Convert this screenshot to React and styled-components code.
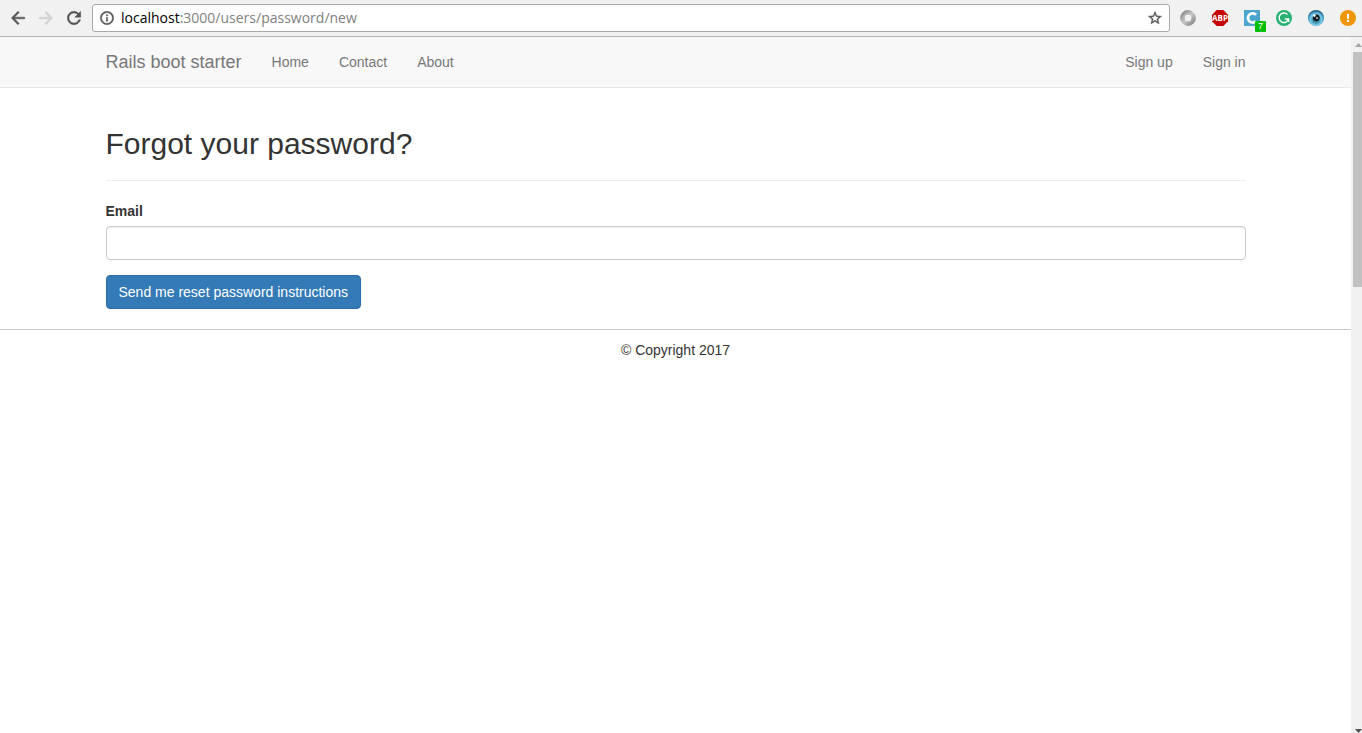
import React from "react";
import styled, { createGlobalStyle } from "styled-components";
import { MdArrowBack, MdArrowForward, MdRefresh, MdInfoOutline, MdStarBorder } from "react-icons/md";

const GlobalStyle = createGlobalStyle`
  *, *::before, *::after { box-sizing: border-box; }
  body {
    margin: 0;
    background: #fff;
    color: #333;
    font: 14px/20px "Liberation Sans", Arial, sans-serif;
  }
`;

const Window = styled.div`
  display: flex;
  flex-direction: column;
  height: 100vh;
  overflow: hidden;
`;

const Toolbar = styled.header`
  display: flex;
  align-items: center;
  flex: none;
  height: 37px;
  padding: 0 6px 0 4px;
  background: #f1f1f1;
  border-bottom: 1px solid #b4b4b4;
`;

const ToolButton = styled.button`
  display: flex;
  align-items: center;
  justify-content: center;
  flex: none;
  width: 28px;
  height: 28px;
  padding: 0;
  border: 0;
  background: none;
  color: ${(p) => (p.disabled ? "#d0d0d0" : "#555")};

  path:not([fill="none"]) { stroke: currentColor; stroke-width: 0.6; }
  path[fill="none"] { stroke: none; }
`;

const AddressBar = styled.div`
  display: flex;
  align-items: center;
  flex: 1;
  height: 28px;
  margin: 0 10px 0 4px;
  padding-right: 5px;
  border: 1px solid #a9a9a9;
  border-radius: 3px;
  background: #fff;
  font: 14px/20px "Open Sans", "Noto Sans", sans-serif;
`;

const Host = styled.label`
  color: #000;
`;

const UrlInput = styled.input`
  flex: 1;
  min-width: 0;
  height: 20px;
  padding: 0;
  border: 0;
  outline: 0;
  background: none;
  color: #808080;
  font: inherit;
`;

const BarButton = styled(ToolButton)`
  width: ${(p) => p.$width};
  height: 20px;
`;

const Extensions = styled.div`
  display: flex;
  gap: 16px;
`;

const ExtensionButton = styled.button`
  position: relative;
  display: block;
  width: 16px;
  height: 16px;
  padding: 0;
  border: 0;
  background: none;

  svg { display: block; }
`;

const Badge = styled.span`
  position: absolute;
  top: 11px;
  left: 11px;
  width: 11px;
  height: 11px;
  border-radius: 1px;
  background: #00c000;
  color: #fff;
  font: 9px/11px "Liberation Sans", sans-serif;
  text-align: center;
`;

const Viewport = styled.div`
  display: flex;
  flex: 1;
  min-height: 0;
`;

const Page = styled.div`
  flex: 1;
  min-width: 0;
  overflow: hidden;
`;

const Container = styled.div`
  max-width: 1170px;
  margin: 0 auto;
  padding: 0 15px;
`;

const Navbar = styled.nav`
  background: #f8f8f8;
  border-bottom: 1px solid #e7e7e7;
`;

const NavRow = styled(Container)`
  display: flex;
  align-items: center;
  min-height: 50px;
`;

const Brand = styled.a`
  padding-right: 15px;
  color: #777;
  font-size: 18px;
  text-decoration: none;
`;

const NavList = styled.ul`
  display: flex;
  margin: ${(p) => (p.$right ? "0 -15px 0 auto" : "0")};
  padding: 0;
  list-style: none;
`;

const NavLink = styled.a`
  display: block;
  padding: 15px;
  color: #777;
  text-decoration: none;
`;

const Main = styled(Container).attrs({ as: "main" })`
  padding-top: 39px;
  padding-bottom: 20px;
`;

const Title = styled.h1`
  margin: 0 0 20px;
  font-size: 30px;
  font-weight: 500;
  line-height: 33px;
`;

const Divider = styled.hr`
  margin: 0 0 20px;
  border: 0;
  border-top: 1px solid #eee;
`;

const FieldLabel = styled.label`
  display: block;
  margin-bottom: 5px;
  font-weight: 700;
`;

const TextField = styled.input`
  display: block;
  width: 100%;
  height: 34px;
  margin-bottom: 15px;
  padding: 6px 12px;
  border: 1px solid #ccc;
  border-radius: 4px;
  background: #fff;
  box-shadow: inset 0 1px 1px rgba(0, 0, 0, 0.075);
  color: #555;
  font: inherit;
`;

const SubmitButton = styled.button`
  display: block;
  height: 34px;
  padding: 6px 12px;
  border: 1px solid #2e6da4;
  border-radius: 4px;
  background: #337ab7;
  color: #fff;
  font: inherit;
`;

const Footer = styled.footer`
  padding: 10px 0;
  border-top: 1px solid #c8c8c8;
  text-align: center;
`;

const Scrollbar = styled.div`
  display: flex;
  flex-direction: column;
  flex: none;
  width: 11px;
  padding-left: 2px;
  background: #f1f1f1;
`;

const ScrollArrow = styled.button`
  display: flex;
  justify-content: flex-end;
  align-items: ${(p) => p.$align};
  flex: none;
  height: ${(p) => p.$height};
  padding: 0;
  border: 0;
  background: none;
  color: ${(p) => p.$color};
`;

const Track = styled.div`
  flex: 1;
`;

const Thumb = styled.div`
  height: 35%;
  background: #c1c1c1;
`;

const RingIcon = () => (
  <svg width="16" height="16" viewBox="0 0 16 16" aria-hidden="true">
    <defs>
      <linearGradient id="ring" x1="0" y1="0" x2="1" y2="1">
        <stop offset="0" stopColor="#8a8a8a" />
        <stop offset="0.5" stopColor="#c8c8c8" />
        <stop offset="1" stopColor="#8a8a8a" />
      </linearGradient>
    </defs>
    <circle cx="8" cy="8" r="5.7" fill="#f1f1f1" stroke="url(#ring)" strokeWidth="4.4" />
    <path d="M4 9.5A4.3 4.3 0 0 1 9 3.8" fill="none" stroke="#b8b8b8" strokeWidth="1.2" />
    <path d="M7 12.3A4.4 4.4 0 0 0 12.3 7" fill="none" stroke="#a8a8a8" strokeWidth="1.2" />
  </svg>
);

const AdblockIcon = () => (
  <svg width="16" height="16" viewBox="0 0 16 16" aria-hidden="true">
    <path d="M4.7 0h6.6L16 4.7v6.6L11.3 16H4.7L0 11.3V4.7z" fill="#c70000" />
    <text x="8" y="11" fill="#fff" fontFamily="Open Sans, sans-serif" fontWeight="700" fontSize="8" textAnchor="middle">
      ABP
    </text>
  </svg>
);

const SquareCIcon = () => (
  <svg width="16" height="16" viewBox="0 0 16 16" aria-hidden="true">
    <path d="M0 0h16v16H0z" fill="#4ba6cf" />
    <path d="M12 4.7A4.7 4.7 0 1 0 12 11.3" fill="none" stroke="#fff" strokeWidth="2.8" />
  </svg>
);

const GreenGIcon = () => (
  <svg width="16" height="16" viewBox="0 0 16 16" aria-hidden="true">
    <circle cx="8" cy="8" r="8" fill="#27b272" />
    <path d="M11.5 4.5A4.8 4.8 0 1 0 12.6 9H8.8M12.6 9v3" fill="none" stroke="#fff" strokeWidth="1.4" />
  </svg>
);

const EyeIcon = () => (
  <svg width="16" height="16" viewBox="0 0 16 16" aria-hidden="true">
    <defs>
      <radialGradient id="iris" cx="0.5" cy="0.6" r="0.55">
        <stop offset="0.3" stopColor="#3584a6" />
        <stop offset="0.65" stopColor="#7dcdec" />
        <stop offset="0.85" stopColor="#3f99c2" />
        <stop offset="1" stopColor="#2c5f7b" />
      </radialGradient>
    </defs>
    <circle cx="8" cy="8" r="8" fill="url(#iris)" />
    <circle cx="8.3" cy="7.8" r="3.4" fill="#101a20" />
    <circle cx="6.4" cy="5.6" r="1.3" fill="#fff" />
    <circle cx="9" cy="8" r="1" fill="#b9cbd2" />
  </svg>
);

const AlertIcon = () => (
  <svg width="16" height="16" viewBox="0 0 16 16" aria-hidden="true">
    <circle cx="8" cy="8" r="8" fill="#f09609" />
    <path d="M7 4h2v5H7zM7 10h2v2H7z" fill="#fff" />
  </svg>
);

const extensions = [
  { name: "Ring", Icon: RingIcon },
  { name: "Adblock", Icon: AdblockIcon },
  { name: "Clipper", Icon: SquareCIcon, badge: "7" },
  { name: "Grammar", Icon: GreenGIcon },
  { name: "Eye", Icon: EyeIcon },
  { name: "Alert", Icon: AlertIcon },
];

const NavItems = ({ items, right }) => (
  <NavList $right={right}>
    {items.map((item) => (
      <li key={item}>
        <NavLink href="#">{item}</NavLink>
      </li>
    ))}
  </NavList>
);

export default function App() {
  return (
    <Window>
      <GlobalStyle />
      <Toolbar>
        <ToolButton aria-label="Back"><MdArrowBack size={20} /></ToolButton>
        <ToolButton aria-label="Forward" disabled><MdArrowForward size={20} /></ToolButton>
        <ToolButton aria-label="Reload"><MdRefresh size={20} /></ToolButton>
        <AddressBar>
          <BarButton $width="28px" aria-label="Site information"><MdInfoOutline size={16} /></BarButton>
          <Host htmlFor="url">localhost</Host>
          <UrlInput id="url" type="text" defaultValue=":3000/users/password/new" spellCheck={false} />
          <BarButton $width="18px" aria-label="Bookmark"><MdStarBorder size={16} /></BarButton>
        </AddressBar>
        <Extensions>
          {extensions.map(({ name, Icon, badge }) => (
            <ExtensionButton key={name} aria-label={name}>
              <Icon />
              {badge && <Badge>{badge}</Badge>}
            </ExtensionButton>
          ))}
        </Extensions>
      </Toolbar>
      <Viewport>
        <Page>
          <Navbar>
            <NavRow>
              <Brand href="#">Rails boot starter</Brand>
              <NavItems items={["Home", "Contact", "About"]} />
              <NavItems items={["Sign up", "Sign in"]} right />
            </NavRow>
          </Navbar>
          <Main>
            <Title>Forgot your password?</Title>
            <Divider />
            <form onSubmit={(e) => e.preventDefault()}>
              <FieldLabel htmlFor="email">Email</FieldLabel>
              <TextField id="email" type="email" />
              <SubmitButton type="submit">Send me reset password instructions</SubmitButton>
            </form>
          </Main>
          <Footer>© Copyright 2017</Footer>
        </Page>
        <Scrollbar>
          <ScrollArrow $height="15px" $align="center" $color="#a3a3a3" aria-label="Scroll up">
            <svg width="7" height="4" viewBox="0 0 7 4"><path d="M0 4 3.5 0 7 4z" fill="currentColor" /></svg>
          </ScrollArrow>
          <Track><Thumb /></Track>
          <ScrollArrow $height="10px" $align="flex-end" $color="#505050" aria-label="Scroll down">
            <svg width="7" height="4" viewBox="0 0 7 4"><path d="M0 0h7L3.5 4z" fill="currentColor" /></svg>
          </ScrollArrow>
        </Scrollbar>
      </Viewport>
    </Window>
  );
}
